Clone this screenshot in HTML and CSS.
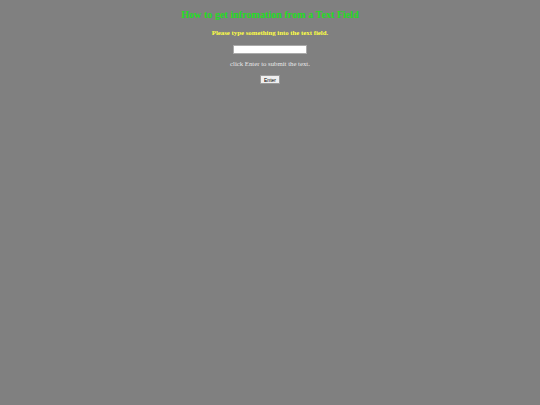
FILE: index.html
```html
<!DOCTYPE html>
<html>
<head>
<meta charset="utf-8">
<link rel="stylesheet" href="styles.css">
</head>
<body>
<div class="page">
  <h1 class="title">How to get infromation from a Text Field</h1>
  <p class="sub">Please type something into the text field.</p>
  <input class="field" type="text">
  <p class="hint">click Enter to submit the text.</p>
  <button class="btn">Enter</button>
</div>
</body>
</html>
```

FILE: styles.css
```css
html, body {
  margin: 0;
  padding: 0;
  background: #808080;
  height: 100%;
}
.page {
  display: flex;
  flex-direction: column;
  align-items: center;
  font-family: "Liberation Serif", serif;
  padding-top: 8px;
}
.title {
  margin: 0;
  font-size: 10.15px;
  font-weight: bold;
  color: #22dd22;
  line-height: 14px;
}
.sub {
  margin: 6px 0 0 0;
  font-size: 6.8px;
  font-weight: bold;
  color: #ffff44;
  line-height: 9px;
}
.field {
  margin-top: 8px;
  width: 74px;
  height: 9px;
  box-sizing: border-box;
  border: 1px solid #aaa;
  background: #fff;
  padding: 0;
}
.hint {
  margin: 6px 0 0 0;
  font-size: 6.75px;
  color: #e8e8e8;
  line-height: 8px;
}
.btn {
  margin-top: 7px;
  width: 20px;
  height: 9px;
  box-sizing: border-box;
  padding: 0;
  font-family: "Liberation Sans", sans-serif;
  font-size: 5px;
  line-height: 6px;
  background: #efefef;
  border: 1px solid #999;
  color: #000;
}
```
